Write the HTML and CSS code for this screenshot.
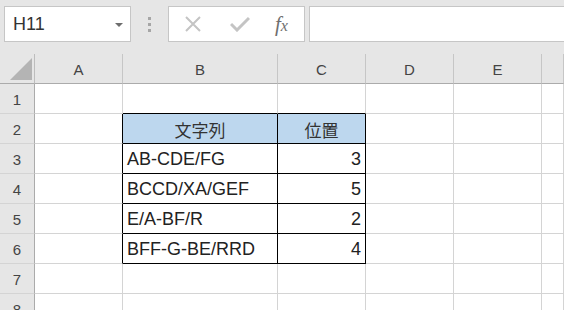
FILE: index.html
```html
<!DOCTYPE html>
<html lang="ja">
<head>
    <meta charset="UTF-8">
    <meta name="viewport" content="width=device-width, initial-scale=1.0">
    <title>Sheet1</title>
    <link rel="stylesheet" href="styles.css">
</head>
<body>

<div class="toolbar">
    <div class="namebox">
        <span class="cellref">H11</span>
        <span class="drop"></span>
    </div>
    <div class="grip"><i></i><i></i><i></i></div>
    <div class="fxbox">
        <svg class="ico" width="18" height="16" viewBox="0 0 18 16">
            <path d="M2 1 L16 15 M16 1 L2 15" stroke="#c4c4c4" stroke-width="2" fill="none"/>
        </svg>
        <svg class="ico" width="20" height="16" viewBox="0 0 20 16">
            <path d="M1 8 L7 14 L19 2" stroke="#c4c4c4" stroke-width="3" fill="none"/>
        </svg>
        <span class="fx"><span class="f">f</span><span class="x">x</span></span>
    </div>
    <div class="formula"></div>
</div>

<div class="sheet">
    <!-- header row -->
    <div class="corner"><span class="tri"></span></div>
    <div class="colhead">A</div>
    <div class="colhead">B</div>
    <div class="colhead">C</div>
    <div class="colhead">D</div>
    <div class="colhead">E</div>
    <div class="colhead"></div>

    <!-- 1 -->
    <div class="rowhead">1</div>
    <div class="cell"></div>
    <div class="cell top"></div>
    <div class="cell top"></div>
    <div class="cell"></div>
    <div class="cell"></div>
    <div class="cell"></div>

    <!-- 2 -->
    <div class="rowhead">2</div>
    <div class="cell left"></div>
    <div class="cell box head jp">文字列</div>
    <div class="cell box head jp">位置</div>
    <div class="cell"></div>
    <div class="cell"></div>
    <div class="cell"></div>

    <!-- 3 -->
    <div class="rowhead">3</div>
    <div class="cell left"></div>
    <div class="cell box">AB-CDE/FG</div>
    <div class="cell box num">3</div>
    <div class="cell"></div>
    <div class="cell"></div>
    <div class="cell"></div>

    <!-- 4 -->
    <div class="rowhead">4</div>
    <div class="cell left"></div>
    <div class="cell box">BCCD/XA/GEF</div>
    <div class="cell box num">5</div>
    <div class="cell"></div>
    <div class="cell"></div>
    <div class="cell"></div>

    <!-- 5 -->
    <div class="rowhead">5</div>
    <div class="cell left"></div>
    <div class="cell box">E/A-BF/R</div>
    <div class="cell box num">2</div>
    <div class="cell"></div>
    <div class="cell"></div>
    <div class="cell"></div>

    <!-- 6 -->
    <div class="rowhead">6</div>
    <div class="cell left"></div>
    <div class="cell box">BFF-G-BE/RRD</div>
    <div class="cell box num">4</div>
    <div class="cell"></div>
    <div class="cell"></div>
    <div class="cell"></div>

    <!-- 7 -->
    <div class="rowhead">7</div>
    <div class="cell"></div>
    <div class="cell"></div>
    <div class="cell"></div>
    <div class="cell"></div>
    <div class="cell"></div>
    <div class="cell"></div>

    <!-- 8 -->
    <div class="rowhead">8</div>
    <div class="cell"></div>
    <div class="cell"></div>
    <div class="cell"></div>
    <div class="cell"></div>
    <div class="cell"></div>
    <div class="cell"></div>
</div>

</body>
</html>
```

FILE: styles.css
```css
* {
    box-sizing: border-box;
}
html, body {
    margin: 0;
    padding: 0;
    height: 310px;
    overflow: hidden;
    background: #fff;
}
body {
    font-family: "Liberation Sans", Arial, sans-serif;
    color: #222;
}

/* formula bar */
.toolbar {
    display: flex;
    align-items: flex-start;
    height: 54px;
    padding: 6px 0 0 4px;
    background: #e6e6e6;
}
.namebox {
    display: flex;
    align-items: center;
    justify-content: space-between;
    width: 127px;
    height: 36px;
    padding: 0 7px 0 8px;
    background: #fff;
    border: 1px solid #c6c6c6;
}
.cellref {
    font-size: 18px;
    color: #333;
}
.drop {
    width: 0;
    height: 0;
    border-left: 4px solid transparent;
    border-right: 4px solid transparent;
    border-top: 4px solid #6d6d6d;
    margin-top: 1px;
}
.grip {
    display: flex;
    flex-direction: column;
    gap: 3px;
    width: 37px;
    padding: 11px 0 0 17px;
}
.grip i {
    display: block;
    width: 3px;
    height: 3px;
    background: #a6a6a6;
}
.fxbox {
    display: flex;
    align-items: center;
    width: 137px;
    height: 36px;
    padding: 0 0 0 15px;
    gap: 26px;
    background: #fff;
    border: 1px solid #c6c6c6;
}
.fxbox .ico + .ico {
    margin-left: 2px;
}
.fx {
    font-family: "Liberation Serif", "Times New Roman", serif;
    font-style: italic;
    color: #6f6f6f;
    margin-left: -1px;
}
.fx .f {
    font-size: 21px;
}
.fx .x {
    font-size: 16px;
}
.formula {
    flex: 1;
    height: 36px;
    margin-left: 4px;
    background: #fff;
    border: 1px solid #c6c6c6;
    border-right: none;
}

/* grid */
.sheet {
    display: grid;
    grid-template-columns: 35px 88px 155px 88px 88px 88px 1fr;
    grid-auto-rows: 30px;
}
.corner {
    position: relative;
    background: #e6e6e6;
    border-right: 1px solid #bdbdbd;
    border-bottom: 1px solid #ababab;
}
.tri {
    position: absolute;
    right: 2px;
    bottom: 3px;
    width: 0;
    height: 0;
    border-left: 22px solid transparent;
    border-bottom: 22px solid #b4b4b4;
}
.colhead {
    display: flex;
    align-items: center;
    justify-content: center;
    background: #e6e6e6;
    border-right: 1px solid #c6c6c6;
    border-bottom: 1px solid #ababab;
    font-size: 15px;
    color: #444;
    padding-top: 1px;
}
.rowhead {
    display: flex;
    align-items: center;
    justify-content: center;
    background: #e6e6e6;
    border-right: 1px solid #ababab;
    border-bottom: 1px solid #d4d4d4;
    font-size: 15px;
    color: #444;
    padding-top: 1px;
}
.cell {
    display: flex;
    align-items: center;
    padding: 1px 4px 0 4px;
    font-size: 18px;
    white-space: nowrap;
    border-right: 1px solid #d4d4d4;
    border-bottom: 1px solid #d4d4d4;
}
.cell.top {
    border-bottom-color: #000;
}
.cell.left {
    border-right-color: #000;
}
.cell.box {
    border-right-color: #000;
    border-bottom-color: #000;
}
.cell.head {
    justify-content: center;
    background: #bdd7ee;
}
.cell.num {
    justify-content: flex-end;
}
.jp {
    font-family: "Noto Sans CJK JP", "Liberation Sans", sans-serif;
    font-size: 17px;
    color: #333;
}
```
